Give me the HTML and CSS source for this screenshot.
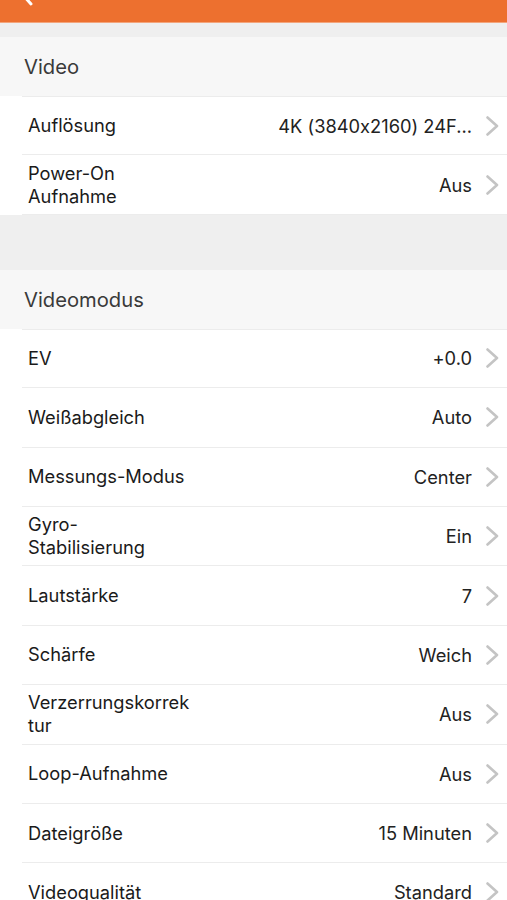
FILE: index.html
```html
<!DOCTYPE html>
<html lang="de">
<head>
    <meta charset="UTF-8">
    <meta name="viewport" content="width=device-width, initial-scale=1.0">
    <title>Einstellungen</title>
    <link rel="stylesheet" href="styles.css">
</head>
<body>
    <div class="navbar">
        <svg class="back" width="14" height="22" viewBox="0 0 14 22">
            <path d="M12 -14 L4 -5 L12 4" fill="none" stroke="#fff" stroke-width="3" stroke-linecap="round" stroke-linejoin="round"/>
        </svg>
    </div>

    <div class="gap small"></div>
    <div class="section-title">Video</div>
    <div class="list">
        <div class="row">
            <span class="label">Auflösung</span>
            <span class="value">4K (3840x2160) 24F...</span>
            <svg class="chevron" width="15" height="20" viewBox="0 0 15 20"><path d="M2.5 1.5 L12 10 L2.5 18.5" /></svg>
        </div>
        <div class="row">
            <span class="label">Power-On<br>Aufnahme</span>
            <span class="value">Aus</span>
            <svg class="chevron" width="15" height="20" viewBox="0 0 15 20"><path d="M2.5 1.5 L12 10 L2.5 18.5" /></svg>
        </div>
    </div>

    <div class="gap large"></div>
    <div class="section-title">Videomodus</div>
    <div class="list">
        <div class="row">
            <span class="label">EV</span>
            <span class="value">+0.0</span>
            <svg class="chevron" width="15" height="20" viewBox="0 0 15 20"><path d="M2.5 1.5 L12 10 L2.5 18.5" /></svg>
        </div>
        <div class="row">
            <span class="label">Weißabgleich</span>
            <span class="value">Auto</span>
            <svg class="chevron" width="15" height="20" viewBox="0 0 15 20"><path d="M2.5 1.5 L12 10 L2.5 18.5" /></svg>
        </div>
        <div class="row">
            <span class="label">Messungs-Modus</span>
            <span class="value">Center</span>
            <svg class="chevron" width="15" height="20" viewBox="0 0 15 20"><path d="M2.5 1.5 L12 10 L2.5 18.5" /></svg>
        </div>
        <div class="row">
            <span class="label">Gyro-<br>Stabilisierung</span>
            <span class="value">Ein</span>
            <svg class="chevron" width="15" height="20" viewBox="0 0 15 20"><path d="M2.5 1.5 L12 10 L2.5 18.5" /></svg>
        </div>
        <div class="row">
            <span class="label">Lautstärke</span>
            <span class="value">7</span>
            <svg class="chevron" width="15" height="20" viewBox="0 0 15 20"><path d="M2.5 1.5 L12 10 L2.5 18.5" /></svg>
        </div>
        <div class="row">
            <span class="label">Schärfe</span>
            <span class="value">Weich</span>
            <svg class="chevron" width="15" height="20" viewBox="0 0 15 20"><path d="M2.5 1.5 L12 10 L2.5 18.5" /></svg>
        </div>
        <div class="row">
            <span class="label">Verzerrungskorrek<br>tur</span>
            <span class="value">Aus</span>
            <svg class="chevron" width="15" height="20" viewBox="0 0 15 20"><path d="M2.5 1.5 L12 10 L2.5 18.5" /></svg>
        </div>
        <div class="row">
            <span class="label">Loop-Aufnahme</span>
            <span class="value">Aus</span>
            <svg class="chevron" width="15" height="20" viewBox="0 0 15 20"><path d="M2.5 1.5 L12 10 L2.5 18.5" /></svg>
        </div>
        <div class="row">
            <span class="label">Dateigröße</span>
            <span class="value">15 Minuten</span>
            <svg class="chevron" width="15" height="20" viewBox="0 0 15 20"><path d="M2.5 1.5 L12 10 L2.5 18.5" /></svg>
        </div>
        <div class="row">
            <span class="label">Videoqualität</span>
            <span class="value">Standard</span>
            <svg class="chevron" width="15" height="20" viewBox="0 0 15 20"><path d="M2.5 1.5 L12 10 L2.5 18.5" /></svg>
        </div>
    </div>
</body>
</html>
```

FILE: styles.css
```css
body {
    font-family: Inter, 'Liberation Sans', Arial, sans-serif;
    font-feature-settings: "calt" 0;
    margin: 0;
    padding: 0;
    background: #efefef;
    color: #1c1c1c;
    overflow: hidden;
}
.navbar {
    height: 22px;
    background: #ed702f;
    border-bottom: 1px solid #f3a57c;
    padding-left: 19px;
    overflow: hidden;
}
.back {
    display: block;
}
.gap.small {
    height: 14px;
}
.gap.large {
    height: 55px;
}
.section-title {
    height: 59px;
    box-sizing: border-box;
    background: #f7f7f7;
    padding-left: 24px;
    display: flex;
    align-items: center;
    font-size: 20.2px;
    color: #3a3a3a;
}
.list {
    background: #fff;
}
.row {
    height: 59.4px;
    box-sizing: border-box;
    margin-left: 22px;
    padding: 0 7px 0 6px;
    display: flex;
    align-items: center;
    border-bottom: 1px solid #ececec;
    font-size: 18.3px;
}
.row:first-child {
    border-top: 1px solid #ececec;
}
.label {
    flex: 1;
    line-height: 23px;
    color: #1a1a1a;
}
.value {
    color: #222;
    margin-right: 13px;
}
.chevron {
    display: block;
    fill: none;
    stroke: #c4c4c4;
    stroke-width: 2.6;
    stroke-linecap: round;
    stroke-linejoin: round;
}
```
